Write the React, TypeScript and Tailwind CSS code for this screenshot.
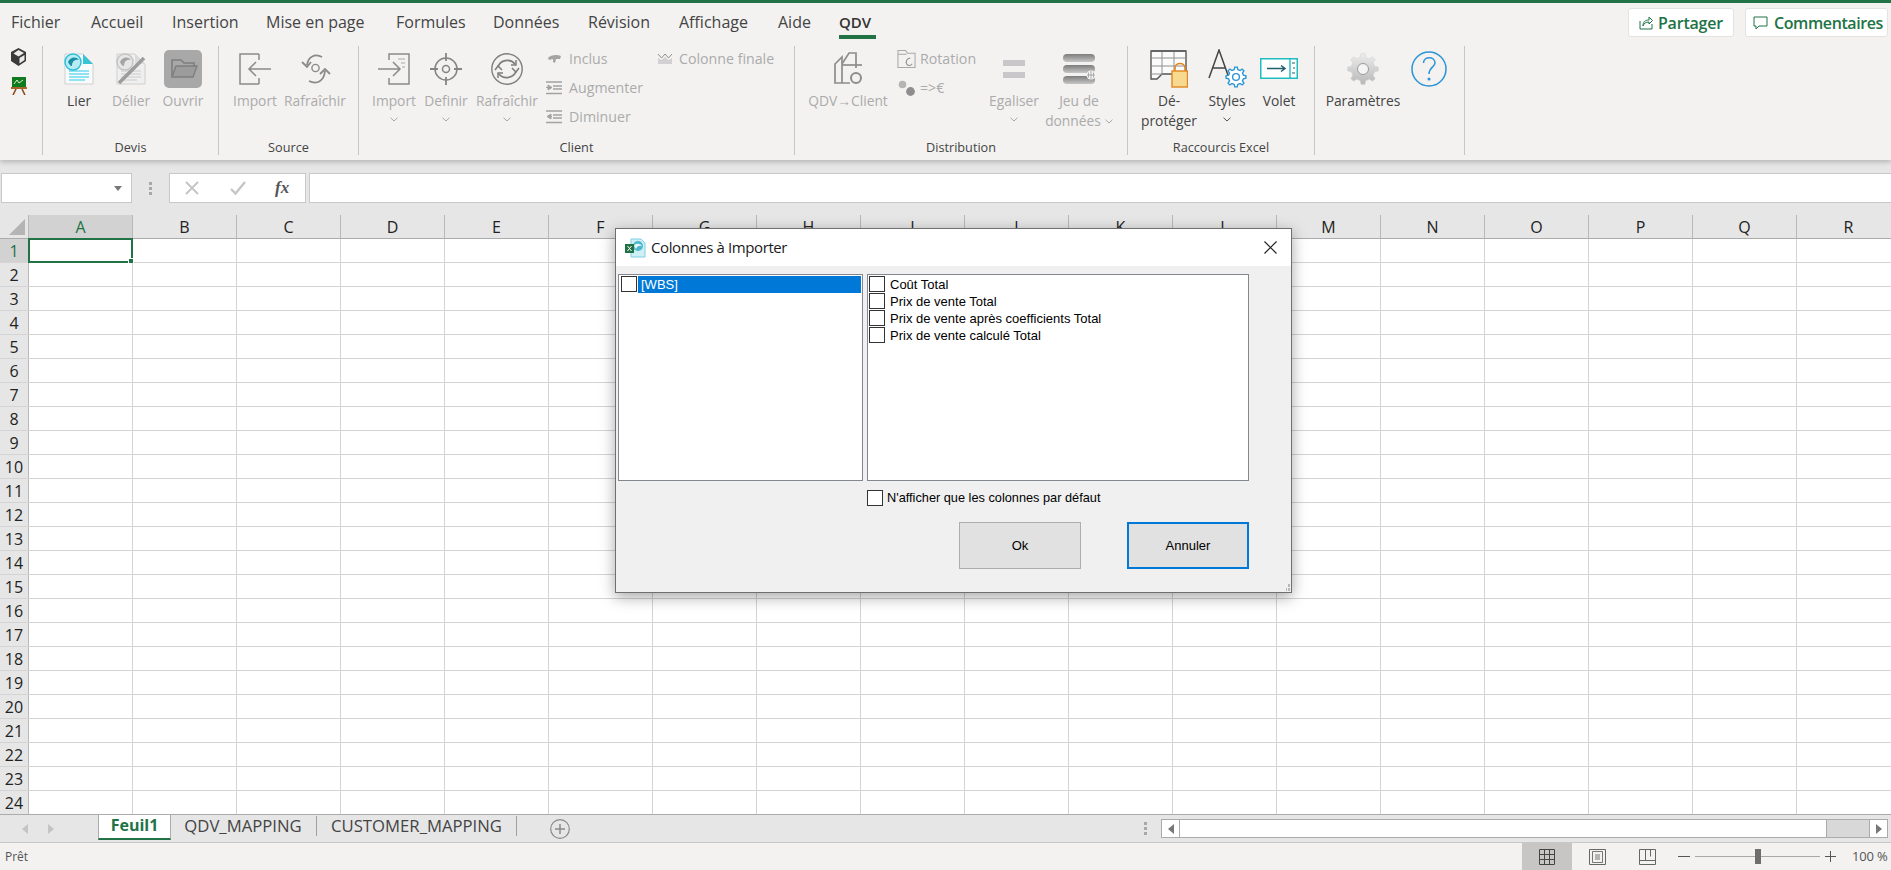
import React from 'react';

const uiFont = "[font-family:'Open_Sans','Noto_Sans',sans-serif]";

const tabs = [
    { name: 'Fichier', w: 'w-[80px]' },
    { name: 'Accueil', w: 'w-[81px]' },
    { name: 'Insertion', w: 'w-[94px]' },
    { name: 'Mise en page', w: 'w-[130px]' },
    { name: 'Formules', w: 'w-[97px]' },
    { name: 'Données', w: 'w-[95px]' },
    { name: 'Révision', w: 'w-[91px]' },
    { name: 'Affichage', w: 'w-[99px]' },
    { name: 'Aide', w: 'w-[61px]' },
];

const columns = ['A', 'B', 'C', 'D', 'E', 'F', 'G', 'H', 'I', 'J', 'K', 'L', 'M', 'N', 'O', 'P', 'Q', 'R'];
const rows = Array.from({ length: 24 }, (_, i) => i + 1);

// gear outline, used by the Paramètres icon
function gearPath(cx: number, cy: number, outer: number, inner: number, teeth: number) {
    const pts: string[] = [];
    const step = (Math.PI * 2) / teeth;
    for (let i = 0; i < teeth; i++) {
        const a = i * step - Math.PI / 2;
        [[-0.3, inner], [-0.16, outer], [0.16, outer], [0.3, inner]].forEach(([o, r]) => {
            const t = a + o * step;
            pts.push(`${(cx + Math.cos(t) * r).toFixed(2)} ${(cy + Math.sin(t) * r).toFixed(2)}`);
        });
    }
    return `M${pts.join('L')}Z`;
}

function Chevron({ color = '#9a9a9a' }: { color?: string }) {
    return (
        <svg width="8" height="5" viewBox="0 0 8 5" fill="none">
            <path d="M0.5 0.7 L4 4 L7.5 0.7" stroke={color} strokeWidth="1" />
        </svg>
    );
}

function RibbonButton({ icon, label, w, disabled = false, chevron = false, second }: { icon: React.ReactNode; label?: string; w: string; disabled?: boolean; chevron?: boolean; second?: React.ReactNode }) {
    return (
        <div className={`${w} shrink-0 flex flex-col items-center ${disabled ? 'text-[#ababab]' : 'text-[#444444]'}`}>
            <div className="h-[45px] flex items-center justify-center">{icon}</div>
            <div className="h-5 leading-5 whitespace-nowrap text-[13.8px]">{label}</div>
            {chevron && <div className="h-5 flex items-center justify-center -mt-[2px]"><Chevron color={disabled ? '#a8a8a8' : '#555555'} /></div>}
            {second && <div className="h-5 leading-5 whitespace-nowrap text-[13.8px]">{second}</div>}
        </div>
    );
}

function SmallItem({ icon, label, iconBox = 'w-4', gap = 'gap-[7px]' }: { icon: React.ReactNode; label: string; iconBox?: string; gap?: string }) {
    return (
        <div className={`h-6 flex items-center ${gap} text-[#ababab] text-[14.2px] whitespace-nowrap`}>
            <div className={`${iconBox} flex justify-center shrink-0`}>{icon}</div>
            <span>{label}</span>
        </div>
    );
}

function Group({ w, label, children, pl }: { w: string; label: string; children: React.ReactNode; pl: string }) {
    return (
        <div className={`${w} shrink-0 h-[109px] border-r border-[#c6c6c6] flex flex-col`}>
            <div className={`h-[92px] flex items-start ${pl}`}>{children}</div>
            <div className="flex-1 text-center text-[12.7px] text-[#444444] leading-[16px] pt-[5px] whitespace-nowrap">{label}</div>
        </div>
    );
}

function DocIcon({ gray }: { gray?: boolean }) {
    const lines = gray ? '#d8d8d8' : '#6fdcf0';
    const lens = gray ? '#c4c4c4' : '#2fc0d8';
    const lensDark = gray ? '#a4a4a4' : '#1d8ea6';
    return (
        <svg width="32" height="32" viewBox="0 0 32 32">
            <path d="M2 1 H20 L30 11 V31 H2 Z" fill={gray ? '#f0efef' : '#f8fbfc'} stroke="#cfcfcf" />
            <path d="M20 1 V11 H30 Z" fill={gray ? '#dcdcdc' : '#39c3d6'} />
            <path d="M6 18 H26 M6 21 H26 M6 24 H26 M6 27 H22" stroke={lines} strokeWidth="1.4" />
            <circle cx="10" cy="9" r="8" fill={gray ? '#e6e6e6' : '#b6edf5'} stroke={lens} strokeWidth="1.5" />
            <path d="M5 9 C7 4 13 3 16 7 C12 6 9 8 9 13 C7 13 6 11 5 9 Z" fill={lensDark} />
            {gray && <path d="M4 30 L29 5" stroke="#9c9c9c" strokeWidth="3.5" />}
        </svg>
    );
}

function OpenIcon() {
    return (
        <svg width="38" height="38" viewBox="0 0 38 38">
            <rect x="0" y="0" width="38" height="38" rx="5" fill="#a8a8a8" />
            <path d="M8 26 V10 H17 L20 13 H30 V16" fill="none" stroke="#7e7e7e" strokeWidth="1.6" />
            <path d="M8 27 L12 16 H33 L29 27 Z" fill="#9c9c9c" stroke="#7e7e7e" strokeWidth="1.4" />
        </svg>
    );
}

function SourceImportIcon() {
    return (
        <svg width="32" height="32" viewBox="0 0 32 32" fill="none" stroke="#8a8a8a" strokeWidth="1.5">
            <path d="M20 1 H1 V31 H20 M20 1 V7 M20 25 V31" />
            <path d="M32 16 H10 M17 9 L10 16 L17 23" />
        </svg>
    );
}

function SourceRefreshIcon() {
    return (
        <svg width="31" height="30" viewBox="0 0 31 30" fill="none" stroke="#8a8a8a" strokeWidth="1.8">
            <circle cx="15.5" cy="14" r="3.6" strokeWidth="1.4" />
            <path d="M22 3 C15 -1 8 3 7 11" />
            <path d="M2 8 L7 13 L11 8" />
            <path d="M9 27 C17 31 24 27 25 17" />
            <path d="M20 20 L25 15 L30 20" />
        </svg>
    );
}

function ClientImportIcon() {
    return (
        <svg width="32" height="32" viewBox="0 0 32 32" fill="none" stroke="#8a8a8a" strokeWidth="1.5">
            <path d="M11 7 V1 H31 V31 H11 V25" />
            <path d="M0 16 H22 M15 9 L22 16 L15 23" />
            <path d="M20 6 H27 M23 10 H27 M24 14 H27" stroke="#a8a8a8" strokeWidth="1.2" />
        </svg>
    );
}

function TargetIcon() {
    return (
        <svg width="32" height="32" viewBox="0 0 32 32" fill="none" stroke="#858585" strokeWidth="1.5">
            <circle cx="16" cy="16" r="11" />
            <circle cx="16" cy="16" r="3.5" />
            <path d="M16 0 V8 M16 24 V32 M0 16 H8 M24 16 H32" strokeWidth="1.8" />
        </svg>
    );
}

function RoundRefreshIcon() {
    return (
        <svg width="32" height="32" viewBox="0 0 32 32" fill="none" stroke="#7e7e7e" strokeWidth="1.4">
            <circle cx="16" cy="16" r="15.2" />
            <path d="M7 14 C9 7 19 5 24 11" strokeWidth="1.6" />
            <path d="M25 18 C23 25 13 27 8 21" strokeWidth="1.6" />
            <path d="M20 12 H25 V7 M4 17 L7 13 L11 17" strokeWidth="1.5" />
            <path d="M28 15 L25 19 L21 15 M12 20 H7 V25" strokeWidth="1.5" />
        </svg>
    );
}

function InclusIcon() {
    return (
        <svg width="13" height="10" viewBox="0 0 13 10">
            <path d="M0 4 C2 1 9 0 13 2 L12 5 L8 5 L7 9 L5 8 L5 5 L1 6 Z" fill="#a4a4a4" />
        </svg>
    );
}

function IndentIcon({ out }: { out?: boolean }) {
    return (
        <svg width="16" height="14" viewBox="0 0 16 14" fill="none" stroke="#a2a2a2">
            <path d="M0 1 H16 M7 5 H16 M7 8 H16 M0 12.5 H16" strokeWidth="1.6" />
            {out ? <path d="M5 4 L1 6.5 L5 9 Z M4 6.5 H6" fill="#a2a2a2" /> : <path d="M2 4 L6 6.5 L2 9 Z M0 6.5 H2" fill="#a2a2a2" />}
        </svg>
    );
}

function CrownIcon() {
    return (
        <svg width="16" height="12" viewBox="0 0 16 12">
            <path d="M1 1 L4.5 5 L8 1 L11.5 5 L15 1" fill="none" stroke="#8e8e8e" />
            <path d="M1 5 L4.5 7 L8 4 L11.5 7 L15 5 V11 H1 Z" fill="#d2d0d2" />
        </svg>
    );
}

function QdvClientIcon() {
    return (
        <svg width="29" height="33" viewBox="0 0 29 33" fill="none" stroke="#8d8d8d" strokeWidth="1.7">
            <path d="M1 12 L8 5 V31 H1 Z M1 31 H16" />
            <path d="M8 12 L15 1 H22 V16" />
            <path d="M8 13 H28" />
            <circle cx="22" cy="26" r="5" strokeWidth="2" />
        </svg>
    );
}

function RotationIcon() {
    return (
        <svg width="20" height="20" viewBox="0 0 20 20" fill="none" stroke="#a8a8a8" strokeWidth="1.1">
            <path d="M1 19 V1 H9 L11 4 H19 V19 Z M1 5 H10" />
            <path d="M14 9 C11 9 9 12 10 15 C11 17 14 18 16 15" stroke="#8c8c8c" />
        </svg>
    );
}

function EuroIcon() {
    return (
        <svg width="18" height="17" viewBox="0 0 18 17">
            <circle cx="4.5" cy="4.5" r="3.8" fill="#b4b4b4" />
            <circle cx="12.5" cy="11.5" r="4.4" fill="#8e8e8e" />
        </svg>
    );
}

function EqualIcon() {
    return (
        <svg width="22" height="18" viewBox="0 0 22 18">
            <rect x="0" y="0" width="22" height="6" fill="#c9c7c9" />
            <rect x="0" y="12" width="22" height="6" fill="#c9c7c9" />
        </svg>
    );
}

function StackIcon() {
    return (
        <svg width="34" height="30" viewBox="0 0 34 30">
            <defs>
                <linearGradient id="stackBar" x1="0" y1="0" x2="0" y2="1">
                    <stop offset="0" stopColor="#7c7c7c" />
                    <stop offset="1" stopColor="#c6c6c6" />
                </linearGradient>
            </defs>
            <rect x="1" y="0" width="32" height="8" rx="4" fill="url(#stackBar)" />
            <rect x="1" y="11" width="32" height="8" rx="4" fill="url(#stackBar)" />
            <rect x="1" y="22" width="32" height="8" rx="4" fill="url(#stackBar)" />
            <circle cx="29" cy="21" r="4.5" fill="#f4f4f4" />
            <path d="M25 21 H33 M29 17 V25 M26.5 18.5 V23.5 M31.5 18.5 V23.5" stroke="#9a9a9a" strokeWidth="0.8" />
        </svg>
    );
}

function ProtectIcon() {
    return (
        <svg width="38" height="38" viewBox="0 0 38 38" fill="none">
            <path d="M1 1 H36 V24 H12 L7 29 H1 Z" fill="#fbfbfb" stroke="#555555" strokeWidth="1.4" />
            <path d="M1 8 H36 M1 16 H36 M1 24 H12 M12 1 V25 M24 1 V25" stroke="#909090" />
            <path d="M1 1 H36" stroke="#666666" strokeWidth="2" />
            <path d="M25 21 V18 C25 12 35 12 35 18 V21" stroke="#e2861f" strokeWidth="1.6" />
            <rect x="22" y="21" width="15.5" height="16" fill="#f7d98f" stroke="#e2861f" strokeWidth="1.4" />
        </svg>
    );
}

function StylesIcon() {
    return (
        <svg width="39" height="39" viewBox="0 0 39 39" fill="none">
            <path d="M1 29 L11 1 L21 29 M4.5 19 H17.5" stroke="#444444" strokeWidth="1.5" />
            <path d={gearPath(28, 28, 10, 7.6, 8)} fill="#ffffff" stroke="#2b95d6" strokeWidth="1.4" />
            <circle cx="28" cy="28" r="3.4" stroke="#2b95d6" strokeWidth="1.4" />
        </svg>
    );
}

function VoletIcon() {
    return (
        <svg width="38" height="21" viewBox="0 0 38 21" fill="none">
            <rect x="0.75" y="0.75" width="36.5" height="19.5" fill="#ffffff" stroke="#1fbcc0" strokeWidth="1.5" />
            <path d="M30 1 V20" stroke="#1fbcc0" strokeWidth="1.4" />
            <path d="M7 10.5 H25 M21 7.5 L25 10.5 L21 13.5" stroke="#1f5e6a" strokeWidth="1.5" />
            <path d="M32 5 H35 M33 10 H35 M32 15 H35" stroke="#1f5e6a" />
        </svg>
    );
}

function SettingsIcon() {
    return (
        <svg width="32" height="32" viewBox="0 0 32 32">
            <defs>
                <linearGradient id="gearFill" x1="0" y1="0" x2="0" y2="1">
                    <stop offset="0" stopColor="#ececec" />
                    <stop offset="1" stopColor="#b8b8b8" />
                </linearGradient>
            </defs>
            <path d={gearPath(16, 16, 15.5, 12, 8)} fill="url(#gearFill)" stroke="#d0d0d0" strokeWidth="0.5" />
            <circle cx="16" cy="16" r="5.5" fill="#f4f4f4" stroke="#9a9a9a" />
        </svg>
    );
}

function HelpIcon() {
    return (
        <svg width="36" height="36" viewBox="0 0 36 36" fill="none" stroke="#2b95d6" strokeWidth="1.5">
            <circle cx="18" cy="18" r="17" />
            <path d="M12.5 12 C12.5 5 24 5 24 12 C24 16 18 16 18 23" />
            <circle cx="18" cy="28" r="0.8" />
        </svg>
    );
}

function Ribbon() {
    return (
        <div className="relative z-10 shrink-0 h-[160px] bg-[#f3f2f1] border-t-[3px] border-[#217346] shadow-[0_2px_5px_rgba(0,0,0,0.22)]">
            <div className="h-[43px] flex items-start pl-[11px] pr-[3px]">
                {tabs.map(t => (
                    <div key={t.name} className={`${t.w} h-[38px] flex items-center text-[16px] text-[#444444] whitespace-nowrap`}>{t.name}</div>
                ))}
                <div className="relative h-[38px] flex items-center text-[15px] font-semibold text-[#333333] w-[37px]">
                    QDV
                    <div className="absolute left-0 right-0 bottom-[2px] h-1 bg-[#217346]"></div>
                </div>
                <div className="ml-auto flex gap-[11px] mt-[5px]">
                    <div className="w-[106px] h-[29px] bg-white border border-[#e3e3e3] rounded-[3px] flex items-center justify-center gap-[5px] text-[16px] font-semibold tracking-[-0.2px] text-[#217346]">
                        <svg width="14" height="15" viewBox="0 0 14 15" fill="none" stroke="#217346">
                            <path d="M1 6 V14 H13 V9" />
                            <path d="M4 11 C4 7 6 5 10 5 V2 L13.5 5.5 L10 9 V7 C7 7 5 8 4 11 Z" />
                        </svg>
                        Partager
                    </div>
                    <div className="w-[143px] h-[29px] bg-white border border-[#e3e3e3] rounded-[3px] flex items-center gap-[6px] pl-[7px] text-[16px] font-semibold tracking-[-0.4px] text-[#217346]">
                        <svg width="15" height="14" viewBox="0 0 15 14" fill="none" stroke="#217346">
                            <path d="M1 1 H14 V10 H6 L3 13 V10 H1 Z" />
                        </svg>
                        Commentaires
                    </div>
                </div>
            </div>
            <div className="flex h-[109px]">
                <div className="w-[43px] shrink-0 border-r border-[#c6c6c6] flex flex-col items-center pr-[5px] pt-[2px] gap-[11px]">
                    <svg width="17" height="18" viewBox="0 0 17 18">
                        <path d="M8.5 0 L16 4 V13 L8.5 18 L1 13 V4 Z" fill="#3a3a3a" />
                        <path d="M8.5 2 L14 5 L8.5 8.5 L3.5 5.5 Z M9.5 10 L14.5 7 V12 L9.5 15.5 Z" fill="#ececec" />
                    </svg>
                    <svg width="16" height="18" viewBox="0 0 16 18">
                        <rect x="1" y="0" width="14" height="10" fill="#0f7a1f" />
                        <path d="M3 7 L6 3 L8 6 L12 3" stroke="#d8f0c8" fill="none" />
                        <path d="M0 10 H16 V12 H0 Z" fill="#a8662a" />
                        <path d="M5 12 L2 18 M11 12 L14 18" stroke="#8a4a1c" strokeWidth="1.6" />
                    </svg>
                </div>
                <Group w="w-[176px]" label="Devis" pl="pl-[10px]">
                    <RibbonButton w="w-[52px]" icon={<DocIcon />} label="Lier" />
                    <RibbonButton w="w-[52px]" icon={<DocIcon gray />} label="Délier" disabled />
                    <RibbonButton w="w-[52px]" icon={<OpenIcon />} label="Ouvrir" disabled />
                </Group>
                <Group w="w-[140px]" label="Source" pl="pl-[8px]">
                    <RibbonButton w="w-[56px]" icon={<SourceImportIcon />} label="Import" disabled />
                    <RibbonButton w="w-[64px]" icon={<SourceRefreshIcon />} label="Rafraîchir" disabled />
                </Group>
                <Group w="w-[436px]" label="Client" pl="pl-[7px]">
                    <RibbonButton w="w-[56px]" icon={<ClientImportIcon />} label="Import" disabled chevron />
                    <RibbonButton w="w-[48px]" icon={<TargetIcon />} label="Definir" disabled chevron />
                    <RibbonButton w="w-[74px]" icon={<RoundRefreshIcon />} label="Rafraîchir" disabled chevron />
                    <div className="w-[113px] shrink-0 flex flex-col gap-[5px] pt-[1px] pl-[2px]">
                        <SmallItem icon={<InclusIcon />} label="Inclus" />
                        <SmallItem icon={<IndentIcon />} label="Augmenter" />
                        <SmallItem icon={<IndentIcon out />} label="Diminuer" />
                    </div>
                    <div className="pt-[1px]">
                        <SmallItem icon={<CrownIcon />} label="Colonne finale" gap="gap-[6px]" />
                    </div>
                </Group>
                <Group w="w-[333px]" label="Distribution" pl="pl-[12px]">
                    <RibbonButton w="w-[82px]" icon={<QdvClientIcon />} label="QDV→Client" disabled />
                    <div className="w-[96px] shrink-0 flex flex-col gap-[5px] pt-[1px] pl-[8px]">
                        <SmallItem icon={<RotationIcon />} label="Rotation" iconBox="w-[19px]" gap="gap-[4px]" />
                        <SmallItem icon={<EuroIcon />} label="=>€" iconBox="w-[19px]" gap="gap-[4px]" />
                    </div>
                    <RibbonButton w="w-[58px]" icon={<EqualIcon />} label="Egaliser" disabled chevron />
                    <RibbonButton
                        w="w-[72px]"
                        icon={<StackIcon />}
                        label="Jeu de"
                        disabled
                        second={<span className="inline-flex items-center gap-[4px]">données <Chevron color="#a8a8a8" /></span>}
                    />
                </Group>
                <Group w="w-[187px]" label="Raccourcis Excel" pl="pl-[5px]">
                    <RibbonButton w="w-[72px]" icon={<ProtectIcon />} label="Dé-" second="protéger" />
                    <RibbonButton w="w-[44px]" icon={<StylesIcon />} label="Styles" chevron />
                    <RibbonButton w="w-[60px]" icon={<VoletIcon />} label="Volet" />
                </Group>
                <Group w="w-[150px]" label="" pl="pl-[3px]">
                    <RibbonButton w="w-[90px]" icon={<SettingsIcon />} label="Paramètres" />
                    <RibbonButton w="w-[41px]" icon={<HelpIcon />} />
                </Group>
            </div>
        </div>
    );
}

function FormulaBar() {
    return (
        <div className="shrink-0 h-[55px] bg-[#e6e6e6] flex items-start pt-[13px] pl-[1px]">
            <div className="w-[131px] h-[30px] bg-white border border-[#c8c8c8] flex items-center justify-end pr-[9px]">
                <svg width="8" height="5" viewBox="0 0 8 5"><path d="M0 0 H8 L4 5 Z" fill="#777777" /></svg>
            </div>
            <div className="w-[37px] h-[30px] flex flex-col items-center justify-center gap-[2px]">
                <div className="w-[3px] h-[3px] bg-[#a8a8a8]"></div>
                <div className="w-[3px] h-[3px] bg-[#a8a8a8]"></div>
                <div className="w-[3px] h-[3px] bg-[#a8a8a8]"></div>
            </div>
            <div className="w-[137px] h-[30px] bg-white border border-[#c8c8c8] flex items-center">
                <svg className="ml-[15px]" width="14" height="14" viewBox="0 0 14 14" fill="none" stroke="#c6c6c6" strokeWidth="2">
                    <path d="M1 1 L13 13 M13 1 L1 13" />
                </svg>
                <svg className="ml-[31px]" width="16" height="14" viewBox="0 0 16 14" fill="none" stroke="#c6c6c6" strokeWidth="2.4">
                    <path d="M1 8 L5.5 12.5 L15 1" />
                </svg>
                <span className="ml-[29px] [font-family:'Liberation_Serif',serif] italic font-bold text-[17px] text-[#555555]">fx</span>
            </div>
            <div className="flex-1 ml-[3px] h-[30px] bg-white border border-[#c8c8c8] border-r-0"></div>
        </div>
    );
}

function Sheet() {
    return (
        <div className="shrink-0 h-[599px] bg-white overflow-hidden">
            <div className="flex h-6 bg-[#e6e6e6] border-b border-[#ababab]">
                <div className="w-[29px] shrink-0 flex items-end justify-end pr-[3px] pb-[3px] border-r border-[#b8b8b8]">
                    <svg width="16" height="16" viewBox="0 0 16 16"><path d="M16 0 V16 H0 Z" fill="#b4b4b4" /></svg>
                </div>
                {columns.map((c, i) => (
                    <div key={c} className={`w-[104px] shrink-0 flex items-center justify-center text-[16px] border-r border-[#b8b8b8] ${i === 0 ? 'bg-[#d2d2d2] text-[#217346]' : 'text-[#222222]'}`}>{c}</div>
                ))}
            </div>
            {rows.map(r => (
                <div key={r} className="flex h-6 border-b border-[#d4d4d4]">
                    <div className={`w-[29px] shrink-0 flex items-center justify-center text-[16px] border-r border-[#b8b8b8] ${r === 1 ? 'bg-[#d2d2d2] text-[#217346]' : 'bg-[#e6e6e6] text-[#222222]'}`}>{r}</div>
                    {columns.map((c, i) => (
                        <div key={c} className="relative w-[104px] shrink-0 border-r border-[#d4d4d4]">
                            {r === 1 && i === 0 && (
                                <div className="absolute -left-px -top-px -right-px -bottom-px border-2 border-[#217346]">
                                    <div className="absolute -right-[3px] -bottom-[3px] w-[6px] h-[6px] bg-[#217346] border border-white"></div>
                                </div>
                            )}
                        </div>
                    ))}
                </div>
            ))}
        </div>
    );
}

function SheetTabs() {
    return (
        <div className="shrink-0 h-[29px] bg-[#e6e6e6] border-t border-[#ababab] border-b border-b-[#c8c8c8] flex items-start">
            <div className="w-[98px] shrink-0 h-[27px] flex items-center gap-[20px] pl-[22px]">
                <svg width="6" height="10" viewBox="0 0 6 10"><path d="M6 0 V10 L0 5 Z" fill="#c4c4c4" /></svg>
                <svg width="6" height="10" viewBox="0 0 6 10"><path d="M0 0 V10 L6 5 Z" fill="#c4c4c4" /></svg>
            </div>
            <div className="-mt-px w-[73px] h-[26px] pb-[3px] bg-white border-x border-t border-[#ababab] border-b-2 border-b-[#217346] flex items-center justify-center text-[16px] font-bold text-[#217346]">Feuil1</div>
            <div className="w-[146px] h-[20px] mt-[1px] pr-[1px] border-r border-[#a0a0a0] flex items-center justify-center text-[16.7px] text-[#444444]">QDV_MAPPING</div>
            <div className="w-[200px] h-[20px] mt-[1px] border-r border-[#a0a0a0] flex items-center justify-center text-[16.7px] text-[#444444] whitespace-nowrap">CUSTOMER_MAPPING</div>
            <svg className="ml-[33px] mt-[4px]" width="20" height="20" viewBox="0 0 20 20" fill="none" stroke="#8a8a8a">
                <circle cx="10" cy="10" r="9.3" strokeWidth="1.2" />
                <path d="M5 10 H15 M10 5 V15" strokeWidth="1.5" />
            </svg>
            <div className="ml-auto flex items-start pr-[3px] mt-[4px]">
                <div className="w-[17px] h-[18px] flex flex-col gap-[2px] pt-[3px]">
                    <div className="w-[3px] h-[3px] bg-[#a8a8a8]"></div>
                    <div className="w-[3px] h-[3px] bg-[#a8a8a8]"></div>
                    <div className="w-[3px] h-[3px] bg-[#a8a8a8]"></div>
                </div>
                <div className="w-[727px] h-[19px] flex bg-[#d8d8d8] border border-[#ababab]">
                    <div className="w-[18px] bg-white border-r border-[#ababab] flex items-center justify-center">
                        <svg width="6" height="10" viewBox="0 0 6 10"><path d="M6 0 V10 L0 5 Z" fill="#777777" /></svg>
                    </div>
                    <div className="w-[647px] bg-white border-r border-[#ababab]"></div>
                    <div className="flex-1"></div>
                    <div className="w-[18px] bg-white border-l border-[#ababab] flex items-center justify-center">
                        <svg width="6" height="10" viewBox="0 0 6 10"><path d="M0 0 V10 L6 5 Z" fill="#777777" /></svg>
                    </div>
                </div>
            </div>
        </div>
    );
}

function StatusBar() {
    return (
        <div className="shrink-0 h-[27px] bg-[#f3f2f1] flex items-center text-[12px] text-[#555555]">
            <span className="pl-[5px]">Prêt</span>
            <div className="ml-auto flex items-center h-full pr-[3px]">
                <div className="w-[50px] h-full bg-[#c8c6c4] flex items-center justify-center">
                    <svg width="16" height="16" viewBox="0 0 16 16" fill="none" stroke="#444444">
                        <path d="M0.5 0.5 H15.5 V15.5 H0.5 Z M0.5 5.5 H15.5 M0.5 10.5 H15.5 M5.5 0.5 V15.5 M10.5 0.5 V15.5" />
                    </svg>
                </div>
                <div className="w-[50px] h-full flex items-center justify-center">
                    <svg width="17" height="16" viewBox="0 0 17 16" fill="none" stroke="#666666">
                        <path d="M0.5 0.5 H16.5 V15.5 H0.5 Z" />
                        <path d="M3.5 2.5 H13.5 V13.5 H3.5 Z M6 6 H11 M6 8 H11 M6 10 H11" stroke="#777777" />
                    </svg>
                </div>
                <div className="w-[50px] h-full flex items-center justify-center">
                    <svg width="17" height="16" viewBox="0 0 17 16" fill="none" stroke="#666666">
                        <path d="M0.5 0.5 H16.5 V15.5 H0.5 Z M0.5 11.5 H16.5 M6.5 0.5 V11.5 M11.5 0.5 V7.5" />
                    </svg>
                </div>
                <div className="w-[12px] h-[1.5px] ml-[6px] bg-[#555555]"></div>
                <div className="relative w-[125px] h-[1.5px] mx-[5px] bg-[#a8a8a8]">
                    <div className="absolute left-[60px] -top-[7px] w-[6px] h-[15px] bg-[#6e6e6e]"></div>
                </div>
                <svg width="11" height="11" viewBox="0 0 11 11" stroke="#555555"><path d="M0 5.5 H11 M5.5 0 V11" /></svg>
                <span className="ml-[16px] w-[36px] text-[13px] tracking-[-0.2px] whitespace-nowrap">100 %</span>
            </div>
        </div>
    );
}

function DialogCheck() {
    return <div className="w-4 h-4 shrink-0 bg-white border border-[#333333]"></div>;
}

const fields = ['Coût Total', 'Prix de vente Total', 'Prix de vente après coefficients Total', 'Prix de vente calculé Total'];

function ImportDialog() {
    return (
        <div className="absolute left-[615px] top-[228px] z-20 w-[677px] h-[365px] bg-[#f0f0f0] border border-[#6f6f6f] shadow-[0_4px_14px_rgba(0,0,0,0.35)] flex flex-col">
            <div className={`h-[37px] shrink-0 bg-white flex items-center pl-[9px] ${uiFont}`}>
                <svg width="21" height="20" viewBox="0 0 21 20">
                    <path d="M6 1 H16 L20 5 V19 H6 Z" fill="#cdeff6" stroke="#7fd0e0" />
                    <circle cx="13" cy="8" r="5" fill="#4fb8cc" />
                    <path d="M9 8 C10 5 15 5 17 8 C14 7 12 8 11 11 Z" fill="#e8fafc" />
                    <rect x="0" y="6" width="9" height="9" fill="#217346" />
                    <path d="M2.5 8 L6.5 13 M6.5 8 L2.5 13" stroke="#ffffff" />
                </svg>
                <span className="ml-[5px] text-[15px] tracking-[-0.4px] text-[#1a1a1a]">Colonnes à Importer</span>
                <svg className="ml-auto mr-[14px]" width="13" height="13" viewBox="0 0 13 13" stroke="#222222" strokeWidth="1.2">
                    <path d="M0.5 0.5 L12.5 12.5 M12.5 0.5 L0.5 12.5" />
                </svg>
            </div>
            <div className="flex-1 flex flex-col pl-[2px] pt-[8px] text-[13px] text-black [font-family:'Liberation_Sans',Arial,sans-serif]">
                <div className="flex gap-[4px] h-[207px]">
                    <div className="w-[245px] bg-white border border-[#828790] pt-[1px] pl-[2px] pr-[1px]">
                        <div className="flex items-start h-[17px]">
                            <DialogCheck />
                            <div className="flex-1 ml-px h-[17px] bg-[#0078d7] text-white leading-[17px] pl-[3px]">[WBS]</div>
                        </div>
                    </div>
                    <div className="w-[382px] bg-white border border-[#828790] pt-[1px] pl-px">
                        {fields.map(f => (
                            <div key={f} className="flex items-start gap-[5px] h-[17px] leading-[17px]">
                                <DialogCheck />
                                <span>{f}</span>
                            </div>
                        ))}
                    </div>
                </div>
                <div className="ml-[249px] mt-[9px] flex items-center gap-[4px] h-4 text-[12.75px]">
                    <DialogCheck />
                    <span>N'afficher que les colonnes par défaut</span>
                </div>
                <div className="ml-[341px] mt-[16px] flex gap-[46px]">
                    <div className="w-[122px] h-[47px] bg-[#e1e1e1] border border-[#adadad] flex items-center justify-center">Ok</div>
                    <div className="w-[122px] h-[47px] bg-[#e1e1e1] border-2 border-[#0078d7] flex items-center justify-center">Annuler</div>
                </div>
            </div>
            <div className="absolute right-[1px] bottom-[1px] w-[7px] h-[7px] grid grid-cols-3 gap-px">
                <span></span><span></span><span className="bg-[#b8b8b8]"></span>
                <span></span><span className="bg-[#b8b8b8]"></span><span className="bg-[#b8b8b8]"></span>
            </div>
        </div>
    );
}

export default function App() {
    return (
        <div className={`relative w-[1891px] h-[870px] overflow-hidden flex flex-col bg-white ${uiFont}`}>
            <Ribbon />
            <FormulaBar />
            <Sheet />
            <SheetTabs />
            <StatusBar />
            <ImportDialog />
        </div>
    );
}
